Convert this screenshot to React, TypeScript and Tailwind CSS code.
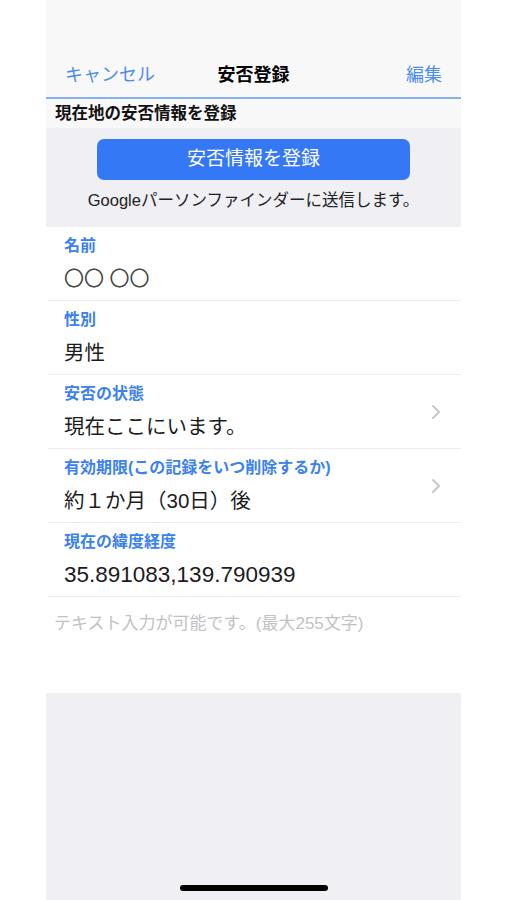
import React from "react";

const font = {
  fontFamily: '"Liberation Sans", "Noto Sans CJK JP", sans-serif',
};

function Chevron() {
  return (
    <svg width="10" height="16" viewBox="0 0 10 16" className="shrink-0">
      <path d="M2 2 L8 8 L2 14" fill="none" stroke="#c4c4c7" strokeWidth="1.8" strokeLinecap="round" strokeLinejoin="round" />
    </svg>
  );
}

function Row({ label, value, chevron, valueClass }: { label: string; value: string; chevron?: boolean; valueClass?: string }) {
  return (
    <div className="h-[74px] border-b border-[#ececee] ml-[2px] flex items-center pr-[20px]">
      <div className="flex-1 pl-[16px] flex flex-col">
        <div className="text-[16px] leading-[20px] font-bold text-[#3b82ec] mt-[-1px]">{label}</div>
        <div className={"leading-[24px] text-[#1c1c1e] mt-[11px] " + (valueClass ?? "text-[20.5px]")}>{value}</div>
      </div>
      {chevron && <Chevron />}
    </div>
  );
}

export default function App() {
  return (
    <div className="w-full h-[900px] bg-white" style={font}>
      <div className="mx-auto w-[415px] h-[900px] flex flex-col bg-[#efeff4] relative">
        <div className="h-[97px] bg-[#f8f8f8] flex items-end pb-[10px]">
          <div className="w-full flex items-center justify-between px-[19px] h-[24px]">
            <span className="text-[18px] text-[#4a8ee8] w-[90px]">キャンセル</span>
            <span className="text-[18px] font-bold text-black">安否登録</span>
            <span className="text-[18px] text-[#4a8ee8] w-[90px] text-right">編集</span>
          </div>
        </div>
        <div className="h-[2px] bg-[#84b3ef]" />
        <div className="h-[29px] bg-[#f8f8f8] flex items-center pl-[9px]">
          <span className="text-[16.5px] font-bold text-[#111]">現在地の安否情報を登録</span>
        </div>
        <div className="h-[99px] flex flex-col items-center pt-[11px]">
          <div className="w-[313px] h-[41px] rounded-[7px] bg-[#3478f6] flex items-center justify-center text-white text-[19px]">
            安否情報を登録
          </div>
          <div className="mt-[9px] text-[16.5px] leading-[22px] text-[#222]">Googleパーソンファインダーに送信します。</div>
        </div>
        <div className="bg-white">
          <Row label="名前" value="〇〇 〇〇" valueClass="text-[20px] text-[#444]" />
          <Row label="性別" value="男性" />
          <Row label="安否の状態" value="現在ここにいます。" chevron />
          <Row label="有効期限(この記録をいつ削除するか)" value="約１か月（30日）後" chevron />
          <Row label="現在の緯度経度" value="35.891083,139.790939" valueClass="text-[22.5px]" />
          <div className="h-[96px] pl-[8px] pt-[14px]">
            <span className="text-[17px] text-[#c2c2c6]">テキスト入力が可能です。(最大255文字)</span>
          </div>
        </div>
        <div className="flex-1" />
        <div className="absolute left-[134px] top-[885px] w-[148px] h-[6px] rounded-full bg-black" />
      </div>
    </div>
  );
}
